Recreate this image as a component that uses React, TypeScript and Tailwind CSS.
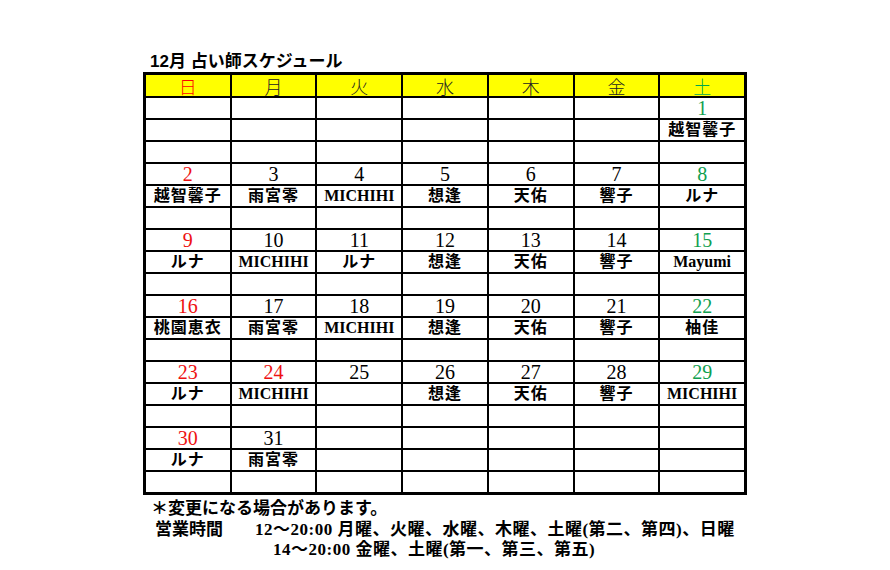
import React from "react";

type Day = { n?: string; c?: "r" | "g"; name?: string };

const weeks: Day[][] = [
  [{}, {}, {}, {}, {}, {}, { n: "1", c: "g", name: "越智馨子" }],
  [
    { n: "2", c: "r", name: "越智馨子" },
    { n: "3", name: "雨宮零" },
    { n: "4", name: "MICHIHI" },
    { n: "5", name: "想逢" },
    { n: "6", name: "天佑" },
    { n: "7", name: "響子" },
    { n: "8", c: "g", name: "ルナ" },
  ],
  [
    { n: "9", c: "r", name: "ルナ" },
    { n: "10", name: "MICHIHI" },
    { n: "11", name: "ルナ" },
    { n: "12", name: "想逢" },
    { n: "13", name: "天佑" },
    { n: "14", name: "響子" },
    { n: "15", c: "g", name: "Mayumi" },
  ],
  [
    { n: "16", c: "r", name: "桃園恵衣" },
    { n: "17", name: "雨宮零" },
    { n: "18", name: "MICHIHI" },
    { n: "19", name: "想逢" },
    { n: "20", name: "天佑" },
    { n: "21", name: "響子" },
    { n: "22", c: "g", name: "柚佳" },
  ],
  [
    { n: "23", c: "r", name: "ルナ" },
    { n: "24", c: "r", name: "MICHIHI" },
    { n: "25" },
    { n: "26", name: "想逢" },
    { n: "27", name: "天佑" },
    { n: "28", name: "響子" },
    { n: "29", c: "g", name: "MICHIHI" },
  ],
  [
    { n: "30", c: "r", name: "ルナ" },
    { n: "31", name: "雨宮零" },
    {},
    {},
    {},
    {},
    {},
  ],
];

const heads = ["日", "月", "火", "水", "木", "金", "土"];

export default function App() {
  return (
    <div className="w-[890px] h-[570px] bg-white pt-[52px] pl-[143px] font-['Liberation_Serif','Noto_Sans_CJK_JP',serif] text-black overflow-hidden">
      <div className="h-[20px] leading-[20px] pl-[7px] text-[17px] font-bold font-['Liberation_Sans','Noto_Sans_CJK_JP',sans-serif]">
        12月 占い師スケジュール
      </div>
      <div className="w-[604px] border-[3px] border-black bg-black grid grid-cols-7 gap-[2px]">
        {heads.map((h, i) => (
          <div
            key={h}
            className={
              "h-[21px] bg-[#ffff00] flex items-center justify-center text-[18px] leading-none font-['Noto_Sans_CJK_JP',serif] font-light " +
              (i === 0 ? "text-[#ff0000]" : i === 6 ? "text-[#00a850]" : "text-[#222]")
            }
          >
            {h}
          </div>
        ))}
        {weeks.map((w, wi) => (
          <React.Fragment key={wi}>
            {w.map((d, di) => (
              <div
                key={"n" + di}
                className={
                  "h-[20px] bg-white flex items-center justify-center text-[20px] leading-none " +
                  (d.c === "r" ? "text-[#ee1111]" : d.c === "g" ? "text-[#10a050]" : "text-black")
                }
              >
                {d.n ?? ""}
              </div>
            ))}
            {w.map((d, di) => (
              <div
                key={"m" + di}
                className={
                  "h-[20px] bg-white flex items-center justify-center font-bold leading-none " +
                  (d.name && /^[A-Za-z]+$/.test(d.name) ? "text-[16px]" : "text-[16px] tracking-[1px]")
                }
              >
                {d.name ?? ""}
              </div>
            ))}
            {w.map((_, di) => (
              <div key={"e" + di} className="h-[20px] bg-white" />
            ))}
          </React.Fragment>
        ))}
      </div>
      <div className="mt-[4px] text-[17px] font-bold leading-[20.5px]">
        <div className="pl-[8px]">＊変更になる場合があります。</div>
        <div className="flex pl-[12px]">
          <span className="w-[100px]">営業時間</span>
          <span className="tracking-[0.5px]">12～20:00 月曜、火曜、水曜、木曜、土曜(第二、第四)、日曜</span>
        </div>
        <div className="pl-[130px] tracking-[0.5px]">14～20:00 金曜、土曜(第一、第三、第五)</div>
      </div>
    </div>
  );
}
